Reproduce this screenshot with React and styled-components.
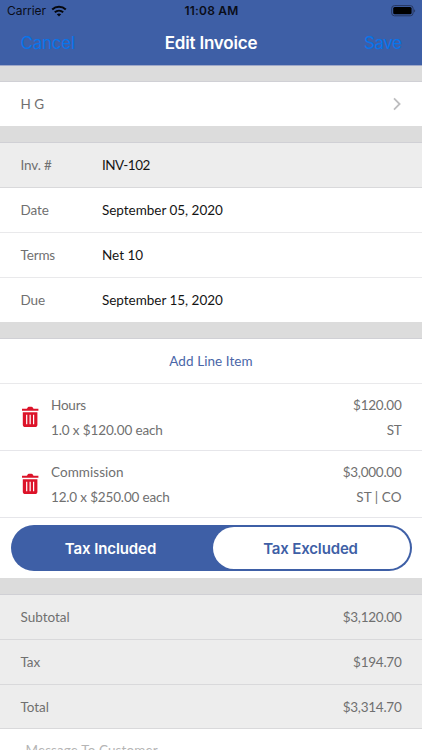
import React from 'react';
import styled, { createGlobalStyle } from 'styled-components';

const BLUE = '#3e5fa6';

const GlobalStyle = createGlobalStyle`
  * { box-sizing: border-box; }
  body { margin: 0; background: #fff; overflow: hidden; }
`;

const Screen = styled.div`
  display: flex;
  flex-direction: column;
  width: 422px;
  height: 750px;
  overflow: hidden;
  background: #fff;
  font-family: Lato, "Liberation Sans", sans-serif;
  font-size: 13.5px;
  line-height: 20px;
  white-space: nowrap;
`;

const Header = styled.header`
  flex: none;
  height: 66px;
  background: ${BLUE};
  border-bottom: 1px solid #9fa8c8;
  font-family: Inter, "Liberation Sans", sans-serif;
`;

const StatusBar = styled.div`
  display: grid;
  grid-template-columns: 1fr auto 1fr;
  align-items: center;
  height: 22px;
  padding: 0 6px 0 7px;
  font-size: 12px;
  color: #0a0d18;
`;

const Carrier = styled.div`
  display: flex;
  align-items: center;
  gap: 5px;
  letter-spacing: -0.05px;
`;

const Clock = styled.div`
  font-weight: 600;
  letter-spacing: 0.2px;
`;

const Battery = styled.svg`
  justify-self: end;
`;

const NavBar = styled.nav`
  display: grid;
  grid-template-columns: 1fr auto 1fr;
  align-items: center;
  height: 42px;
  padding: 0 20.5px 0 20.5px;
`;

const NavButton = styled.button`
  justify-self: ${(p) => (p.$end ? 'end' : 'start')};
  padding: 0;
  border: 0;
  background: none;
  font: 400 17px/22px Inter, "Liberation Sans", sans-serif;
  letter-spacing: ${(p) => (p.$end ? '-0.45px' : '-0.25px')};
  color: #0874ec;
`;

const Title = styled.h1`
  margin: 0;
  font-size: 17px;
  line-height: 22px;
  font-weight: 600;
  letter-spacing: -0.2px;
  color: #fff;
`;

const Gap = styled.div`
  flex: none;
  height: ${(p) => p.$h || 17}px;
  background: #dcdcdc;
  border-bottom: 1px solid #d0d0d5;
`;

const Row = styled.div`
  flex: none;
  display: flex;
  align-items: center;
  justify-content: ${(p) => (p.$center ? 'center' : 'flex-start')};
  height: ${(p) => p.$h || 45}px;
  padding: 0 20.5px ${(p) => p.$lift || 0}px 20.5px;
  background: ${(p) => (p.$shaded ? '#ededed' : '#fff')};
  border-bottom: ${(p) => (p.$last ? '0' : `1px solid ${p.$shaded ? '#d9d9db' : '#e9e9eb'}`)};
`;

const Text = styled.span`
  color: ${(p) => p.$color || '#707070'};
  letter-spacing: ${(p) => p.$ls || 0}px;
`;

const Label = styled(Text)`
  width: 81.5px;
`;

const Amount = styled(Text)`
  margin-left: auto;
`;

const Chevron = styled.svg`
  margin: 0 1px 0 auto;
`;

const ItemRow = styled.div`
  flex: none;
  display: grid;
  grid-template-columns: 31px 1fr auto;
  align-items: center;
  height: 67px;
  padding: 0 20.5px 0 20px;
  border-bottom: 1px solid #e6e6ea;
`;

const Stack = styled.div`
  display: flex;
  flex-direction: column;
  gap: 5px;
  padding-top: 1px;
  align-items: ${(p) => (p.$end ? 'flex-end' : 'flex-start')};
`;

const ToggleArea = styled.div`
  flex: none;
  height: 60px;
  padding: 7px 10.5px 0;
`;

const Toggle = styled.div`
  display: grid;
  grid-template-columns: 200px 1fr;
  height: 46px;
  padding: 2px;
  border-radius: 23px;
  background: ${BLUE};
`;

const Option = styled.button`
  padding: ${(p) => (p.$on ? '1px 1px 0 0' : '1px 4px 0 0')};
  border: 0;
  border-radius: 21px;
  background: ${(p) => (p.$on ? '#fff' : 'transparent')};
  color: ${(p) => (p.$on ? BLUE : '#fff')};
  font: 600 15px/22px Inter, "Liberation Sans", sans-serif;
  letter-spacing: ${(p) => (p.$on ? '-0.15px' : '-0.1px')};
`;

const Message = styled.div`
  padding: 11px 0 0 25.5px;
`;

const WifiIcon = () => (
  <svg width="16" height="12" viewBox="0 0 16 12" fill="none" stroke="#05070d">
    <path d="M1.2 4.5C5.1.9 10.9.9 14.8 4.5" strokeWidth="2.1" />
    <path d="M3.8 7.3C6.2 5.2 9.8 5.2 12.2 7.3" strokeWidth="2" />
    <path d="M8 11.4 5.8 9.2C7.1 8.1 8.9 8.1 10.2 9.2Z" fill="#05070d" stroke="none" />
  </svg>
);

const BatteryIcon = () => (
  <Battery width="25" height="12" viewBox="0 0 25 12">
    <rect x="0.7" y="0.6" width="21.4" height="10.2" rx="2.8" fill="none" stroke="#26365f" strokeWidth="1" />
    <rect x="2.2" y="2.1" width="18.4" height="7.2" rx="1.5" fill="#000" />
    <path d="M23.2 4.2C24.5 4.8 24.5 6.8 23.2 7.4Z" fill="#26365f" />
  </Battery>
);

const TrashIcon = () => (
  <svg width="20" height="22" viewBox="0 0 20 22">
    <path
      fill="#dc1329"
      d="M2 2.8H6.6Q7.2 2.8 7.4 2.1Q7.8 0.7 9 0.7H11.4Q12.6 0.7 13 2.1Q13.2 2.8 13.8 2.8H18.4V4.8H2Z"
    />
    <path fill="#dc1329" d="M2.8 6.2H17.4V18.4Q17.4 21 14.8 21H5.5Q2.8 21 2.8 18.4Z" />
    <path d="M6.7 8.7V18.2M10.15 8.7V18.2M13.6 8.7V18.2" stroke="#fff" strokeWidth="1.2" />
  </svg>
);

const details = [
  { label: 'Inv. #', ls: -0.15, value: 'INV-102', vls: -0.5, shaded: true, h: 45 },
  { label: 'Date', ls: -0.1, value: 'September 05, 2020', vls: -0.02, h: 45, lift: 1 },
  { label: 'Terms', ls: -0.15, value: 'Net 10', vls: 0, h: 45, lift: 1 },
  { label: 'Due', ls: -0.1, value: 'September 15, 2020', vls: -0.02, h: 44, lift: 1, last: true },
];

const items = [
  { name: 'Hours', nls: -0.2, qty: '1.0 x $120.00 each', qls: -0.12, amount: '$120.00', als: -0.25, tax: 'ST', tls: -0.3 },
  { name: 'Commission', nls: 0.05, qty: '12.0 x $250.00 each', qls: -0.16, amount: '$3,000.00', als: -0.25, tax: 'ST | CO', tls: 0.05 },
];

const totals = [
  { label: 'Subtotal', ls: 0, value: '$3,120.00', vls: -0.25, h: 45 },
  { label: 'Tax', ls: -0.1, value: '$194.70', vls: -0.25, h: 45, lift: 1 },
  { label: 'Total', ls: -0.05, value: '$3,314.70', vls: -0.25, h: 44 },
];

export default function App() {
  return (
    <Screen>
      <GlobalStyle />
      <Header>
        <StatusBar>
          <Carrier>
            Carrier
            <WifiIcon />
          </Carrier>
          <Clock>11:08 AM</Clock>
          <BatteryIcon />
        </StatusBar>
        <NavBar>
          <NavButton>Cancel</NavButton>
          <Title>Edit Invoice</Title>
          <NavButton $end>Save</NavButton>
        </NavBar>
      </Header>
      <Gap $h={16} />
      <Row $h={44} $last>
        <Text>H G</Text>
        <Chevron width="8" height="14" viewBox="0 0 8 14">
          <path d="M1 1.4 6.6 7 1 12.6" fill="none" stroke="#bdbdbf" strokeWidth="1.8" />
        </Chevron>
      </Row>
      <Gap />
      {details.map((d) => (
        <Row key={d.label} $h={d.h} $lift={d.lift} $shaded={d.shaded} $last={d.last}>
          <Label $ls={d.ls}>{d.label}</Label>
          <Text $color="#151515" $ls={d.vls}>{d.value}</Text>
        </Row>
      ))}
      <Gap />
      <Row $center $lift={1}>
        <Text $color="#4a66a8" $ls={0.07}>Add Line Item</Text>
      </Row>
      {items.map((i) => (
        <ItemRow key={i.name}>
          <TrashIcon />
          <Stack>
            <Text $ls={i.nls}>{i.name}</Text>
            <Text $ls={i.qls}>{i.qty}</Text>
          </Stack>
          <Stack $end>
            <Text $ls={i.als}>{i.amount}</Text>
            <Text $ls={i.tls}>{i.tax}</Text>
          </Stack>
        </ItemRow>
      ))}
      <ToggleArea>
        <Toggle>
          <Option>Tax Included</Option>
          <Option $on>Tax Excluded</Option>
        </Toggle>
      </ToggleArea>
      <Gap />
      {totals.map((t) => (
        <Row key={t.label} $h={t.h} $lift={t.lift} $shaded>
          <Label $ls={t.ls}>{t.label}</Label>
          <Amount $ls={t.vls}>{t.value}</Amount>
        </Row>
      ))}
      <Message>
        <Text $color="#b5b5b5" $ls={0.1}>Message To Customer</Text>
      </Message>
    </Screen>
  );
}
